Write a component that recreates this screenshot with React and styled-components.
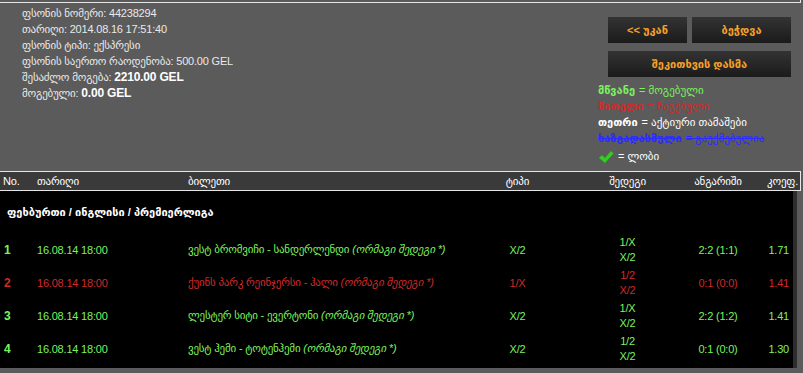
import React from "react";
import styled, { createGlobalStyle } from "styled-components";

const GlobalStyle = createGlobalStyle`
  body {
    margin: 0;
    background: #5b5b5b;
    font-family: "Liberation Sans", "DejaVu Sans", sans-serif;
  }
`

const GREEN = "#7cf25e";
const RED = "#d02a2a";

const Page = styled.div`
  width: 803px;
  height: 373px;
  overflow: hidden;
  background: #5b5b5b;
`

const TopEdge = styled.div`
  width: 801px;
  height: 3px;
  box-sizing: border-box;
  border-bottom: 1px solid #e6e6e6;
  border-right: 1px solid #e6e6e6;
`

const TopPanel = styled.div`
  display: flex;
  justify-content: space-between;
  height: 168px;
`

const Info = styled.div`
  padding: 2px 0 0 22px;
  color: #e9e9e9;
  font-size: 11px;
  letter-spacing: -0.2px;
  line-height: 16px;
`

const InfoLine = styled.div`
  white-space: nowrap;
`

const Strong = styled.b`
  font-size: 12px;
  color: #fff;
`

const Side = styled.div`
  width: 205px;
  padding-top: 14px;
`

const Actions = styled.div`
  display: grid;
  grid-template-columns: 79px 99px;
  gap: 8px 5px;
  margin-left: 10px;
`

const Button = styled.div`
  grid-column: ${(p) => (p.wide ? "1 / span 2" : "auto")};
  height: 26px;
  display: flex;
  align-items: center;
  justify-content: center;
  background: linear-gradient(#333333, #1b1b1b);
  color: #f6a12a;
  font-size: 11px;
  font-weight: bold;
  white-space: nowrap;
`

const Legend = styled.div`
  margin-top: 5px;
  font-size: 11px;
  line-height: 16px;
`

const LegendLine = styled.div`
  display: flex;
  align-items: center;
  gap: 4px;
  white-space: nowrap;
  color: ${(p) => p.color};
  text-decoration: ${(p) => (p.strike ? "line-through" : "none")};
`

const LegendKey = styled.b`
  font-weight: bold;
`

const Check = styled.svg`
  width: 16px;
  height: 16px;
  margin-top: 3px;
`

const HeaderRow = styled.div`
  display: grid;
  grid-template-columns: 37px 151px 282px 95px 125px 56px 1fr;
  align-items: center;
  width: 801px;
  height: 20px;
  box-sizing: border-box;
  border-top: 1px solid #e6e6e6;
  border-bottom: 1px solid #e6e6e6;
  border-right: 1px solid #e6e6e6;
  background: #3a3a3a;
  color: #fff;
  font-size: 11px;
  letter-spacing: -0.2px;
`

const Cell = styled.div`
  text-align: ${(p) => p.align || "left"};
  padding-left: ${(p) => p.pl || 0}px;
  padding-right: ${(p) => p.pr || 0}px;
  white-space: nowrap;
`

const Body = styled.div`
  width: 797px;
  height: 177px;
  box-sizing: border-box;
  background: #000;
  padding: 12px 0 0;
  border-right: 4px solid #2e2e2e;
`

const Section = styled.div`
  height: 18px;
  line-height: 18px;
  padding-left: 7px;
  color: #fff;
  font-size: 11px;
  font-weight: bold;
  margin-bottom: 12px;
`

const Row = styled.div`
  display: grid;
  grid-template-columns: 37px 151px 282px 95px 125px 56px 1fr;
  align-items: center;
  height: 33px;
  color: ${(p) => p.color};
  font-size: 11px;
  letter-spacing: -0.2px;
`

const Num = styled.b`
  padding-left: 4px;
  font-size: 12px;
`

const Outcome = styled.div`
  text-align: center;
  line-height: 15px;
`

const Note = styled.i`
  font-style: italic;
`

const rows = [
  { n: 1, color: GREEN, match: "ვესტ ბრომვიჩი - სანდერლენდი", type: "X/2", out: ["1/X", "X/2"], score: "2:2 (1:1)", odd: "1.71" },
  { n: 2, color: RED, match: "ქუინს პარკ რეინჯერსი - ჰალი", type: "1/X", out: ["1/2", "X/2"], score: "0:1 (0:0)", odd: "1.41" },
  { n: 3, color: GREEN, match: "ლესტერ სიტი - ევერტონი", type: "X/2", out: ["1/X", "X/2"], score: "2:2 (1:2)", odd: "1.41" },
  { n: 4, color: GREEN, match: "ვესტ ჰემი - ტოტენჰემი", type: "X/2", out: ["1/2", "X/2"], score: "0:1 (0:0)", odd: "1.30" },
];

export default function App() {
  return (
    <Page>
      <GlobalStyle />
      <TopEdge />
      <TopPanel>
        <Info>
          <InfoLine>ფსონის ნომერი: 44238294</InfoLine>
          <InfoLine>თარიღი: 2014.08.16 17:51:40</InfoLine>
          <InfoLine>ფსონის ტიპი: ექსპრესი</InfoLine>
          <InfoLine>ფსონის საერთო რაოდენობა: 500.00 GEL</InfoLine>
          <InfoLine>შესაძლო მოგება: <Strong>2210.00 GEL</Strong></InfoLine>
          <InfoLine>მოგებული: <Strong>0.00 GEL</Strong></InfoLine>
        </Info>
        <Side>
          <Actions>
            <Button>&lt;&lt; უკან</Button>
            <Button>ბეჭდვა</Button>
            <Button wide>შეკითხვის დასმა</Button>
          </Actions>
          <Legend>
            <LegendLine color={GREEN}><LegendKey>მწვანე</LegendKey> = მოგებული</LegendLine>
            <LegendLine color={RED}><LegendKey>წითელი</LegendKey> = წაგებული</LegendLine>
            <LegendLine color="#ffffff"><LegendKey>თეთრი</LegendKey> = აქტიური თამაშები</LegendLine>
            <LegendLine color="#2b2bff" strike><LegendKey>ხაზგადასმული</LegendKey> = გაუქმებულია</LegendLine>
            <LegendLine color="#ffffff">
              <Check viewBox="0 0 16 16">
                <path d="M1 9 L4 6 L7 9 L13 2 L15.5 4.5 L7 14 Z" fill="#33cc22" />
              </Check>
              <span>= ლობი</span>
            </LegendLine>
          </Legend>
        </Side>
      </TopPanel>
      <HeaderRow>
        <Cell pl={3}>No.</Cell>
        <Cell>თარიღი</Cell>
        <Cell>ბილეთი</Cell>
        <Cell align="center">ტიპი</Cell>
        <Cell align="center">შედეგი</Cell>
        <Cell align="center">ანგარიში</Cell>
        <Cell align="right" pr={2}>კოეფ.</Cell>
      </HeaderRow>
      <Body>
        <Section>ფეხბურთი / ინგლისი / პრემიერლიგა</Section>
        {rows.map((r) => (
          <Row key={r.n} color={r.color}>
            <Num>{r.n}</Num>
            <Cell>16.08.14 18:00</Cell>
            <Cell>
              {r.match} <Note>(ორმაგი შედეგი *)</Note>
            </Cell>
            <Cell align="center">{r.type}</Cell>
            <Outcome>
              <div>{r.out[0]}</div>
              <div>{r.out[1]}</div>
            </Outcome>
            <Cell align="center">{r.score}</Cell>
            <Cell align="right" pr={4}>{r.odd}</Cell>
          </Row>
        ))}
      </Body>
    </Page>
  );
}
